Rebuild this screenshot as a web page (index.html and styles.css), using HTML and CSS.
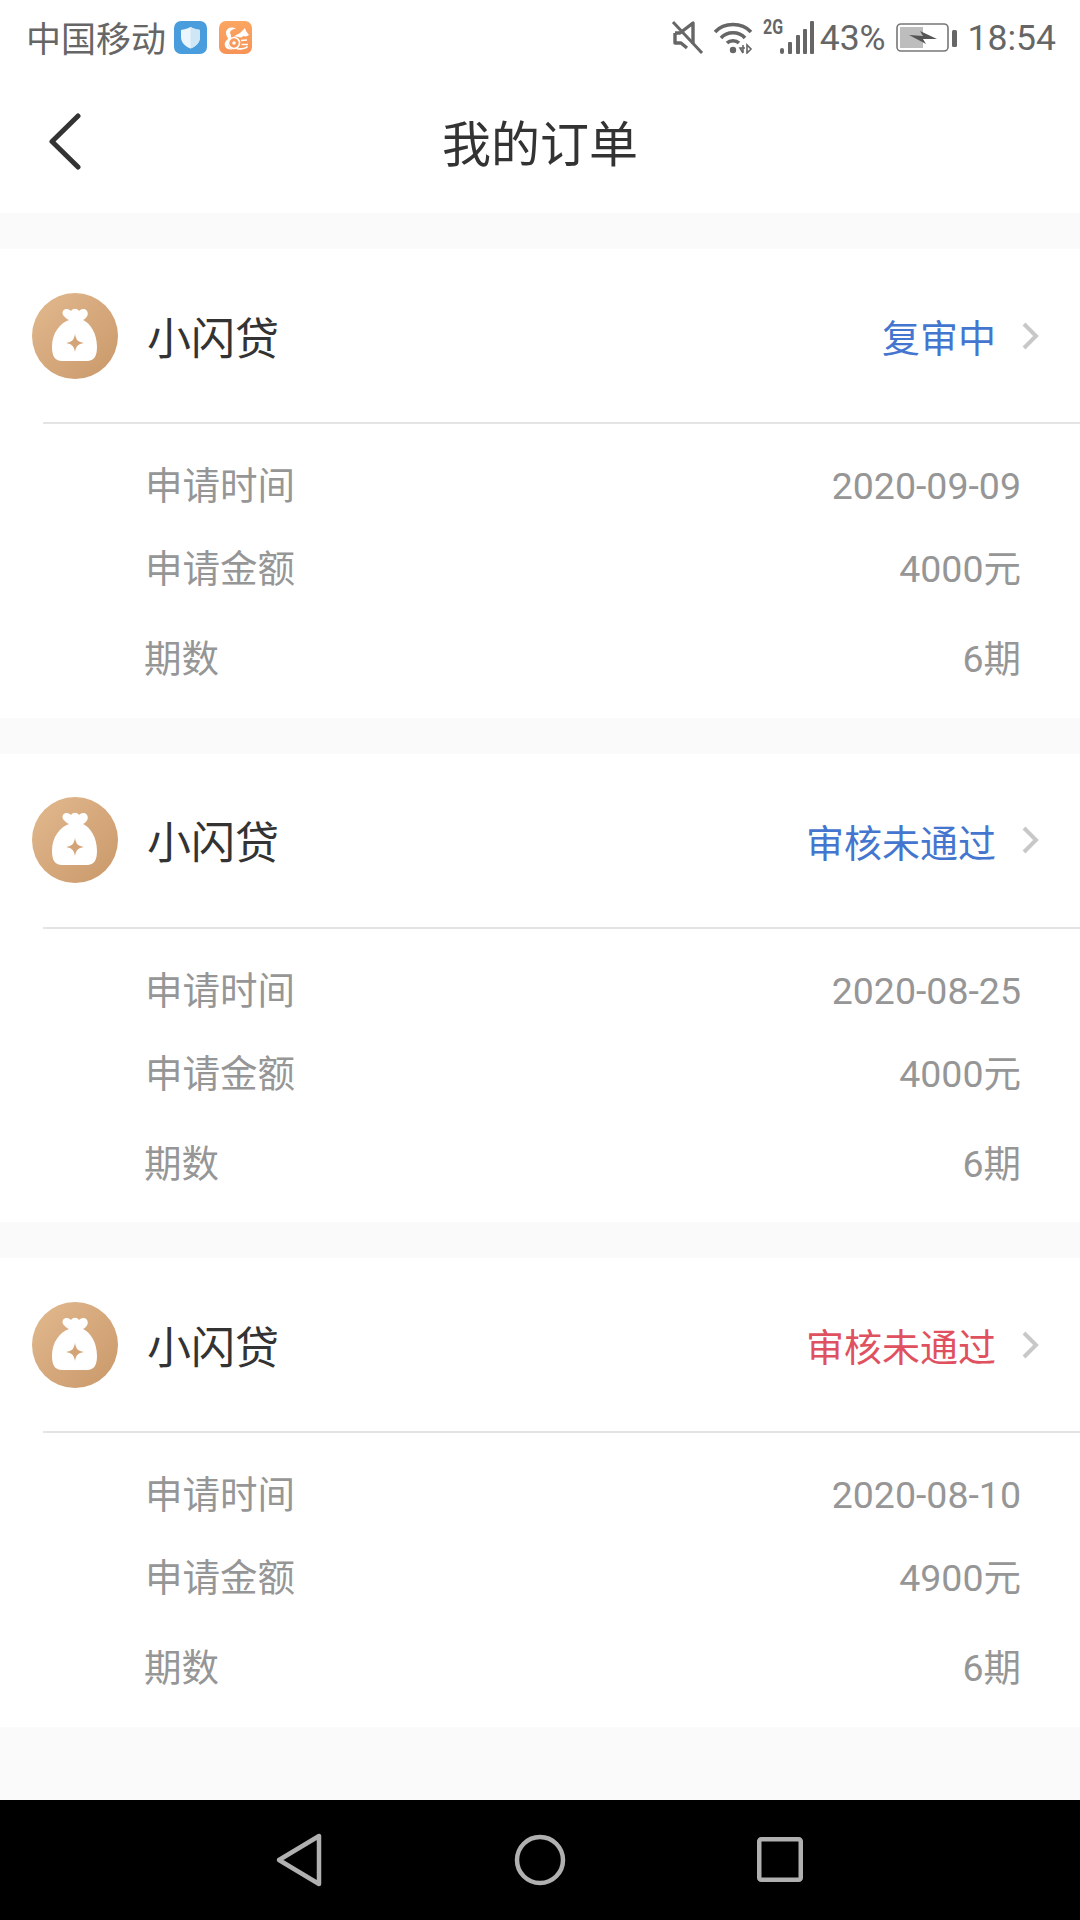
FILE: index.html
```html
<!DOCTYPE html>
<html lang="zh-CN">
<head>
    <meta charset="UTF-8">
    <meta name="viewport" content="width=device-width, initial-scale=1.0">
    <title>我的订单</title>
    <link rel="stylesheet" href="styles.css">
</head>
<body>
    <div class="top-area">
        <div class="status-bar">
            <div class="status-left">
                <span class="carrier">中国移动</span>
                <svg class="app-icon" width="33" height="33" viewBox="0 0 33 33">
                    <rect width="33" height="33" rx="7" fill="#4a9ddc"/>
                    <path d="M16.5 6 C20 8 23 8.500 26 9 V16 C26 22 21.500 25.500 16.500 27.500 C11.500 25.500 7 22 7 16 V9 C10 8.500 13 8 16.500 6Z" fill="#eaf5fc"/>
                    <path d="M16.500 6 C20 8 23 8.500 26 9 V16 C26 22 21.500 25.500 16.500 27.500Z" fill="#cfe6f6"/>
                </svg>
                <svg class="app-icon app-icon-uc" width="33" height="33" viewBox="0 0 33 33">
                    <defs>
                        <linearGradient id="ucBg" x1="0" y1="0" x2="0" y2="1">
                            <stop offset="0" stop-color="#fba661"/>
                            <stop offset="1" stop-color="#f79358"/>
                        </linearGradient>
                    </defs>
                    <rect width="33" height="33" rx="7" fill="url(#ucBg)"/>
                    <path d="M17 8 C13 5 7 7 7 12 C7 15 9 16 9 18 C6 20 5 23 6 25 C7 28 10 28.500 14 28.500 C9 27 7 22 11 18 C13 16 12 14 11 12 C11 10 13 8 17 8Z" fill="#fff"/>
                    <path d="M15 15.500 C18 13 20 13 21 12 L24 9 L26 7 L27 10 L30 14 L27 15.500 L24 15 C23 17 21 16.500 19 16 C18 15.500 16 15.500 15 15.500Z" fill="#fff"/>
                    <circle cx="15" cy="22" r="5.500" fill="none" stroke="#fff" stroke-width="1.600"/>
                    <circle cx="15" cy="22" r="1.800" fill="#fff"/>
                    <path d="M22 19.500 L28 19 M22.500 23.500 H29 M18 28 C23 28 27 27.500 28.500 25.500" fill="none" stroke="#fff" stroke-width="1.600"/>
                </svg>
            </div>
            <div class="status-right">
                <svg class="icon-mute" width="33" height="35" viewBox="0 0 33 35">
                    <path d="M4 13 H9 L22 3 V24 M4 13 V23 H10 L16 28" fill="none" stroke="#666" stroke-width="3.400" stroke-linejoin="round"/>
                    <path d="M2 2 L31 33" stroke="#666" stroke-width="3"/>
                </svg>
                <svg class="icon-wifi" width="40" height="33" viewBox="0 0 40 33">
                    <path d="M2 11 C11 1 29 1 38 11" fill="none" stroke="#666" stroke-width="3.500"/>
                    <path d="M8 17 C14 10 26 10 32 17" fill="none" stroke="#666" stroke-width="3.500"/>
                    <path d="M14 22 C17 19 23 19 26 22" fill="none" stroke="#666" stroke-width="3.500"/>
                    <circle cx="20" cy="29" r="3.200" fill="#666"/>
                    <path d="M30 32 L27 27 H32 M30 24 V32 M34 24 V32 L38 28Z" fill="none" stroke="#666" stroke-width="1.600"/>
                </svg>
                <span class="net-type">2G</span>
                <svg class="icon-signal" width="35" height="34" viewBox="0 0 35 34">
                    <rect x="0" y="27" width="4" height="6" rx="2" fill="#666"/>
                    <rect x="8" y="21" width="4" height="12" rx="1" fill="#666"/>
                    <rect x="16" y="14" width="4" height="19" rx="1" fill="#666"/>
                    <rect x="23" y="8" width="4" height="25" rx="1" fill="#666"/>
                    <rect x="30" y="0" width="4" height="33" rx="1" fill="#666"/>
                </svg>
                <span class="battery-text">43%</span>
                <svg class="icon-battery" width="61" height="30" viewBox="0 0 61 30">
                    <rect x="1" y="1" width="51" height="27" rx="4" fill="none" stroke="#777" stroke-width="1.600"/>
                    <rect x="4" y="4" width="23" height="21" fill="#bdbdbd"/>
                    <path d="M13 12 L27 13 L24 8 L41 16 L27 16 L30 21 Z" fill="#555"/>
                    <rect x="56" y="7" width="5" height="17" rx="1.500" fill="#666"/>
                </svg>
                <span class="clock">18:54</span>
            </div>
        </div>
        <div class="nav-bar">
            <a class="back-btn">
                <svg width="36" height="60" viewBox="0 0 36 60">
                    <path d="M31 3 L5 28.500 L31 54" fill="none" stroke="#333" stroke-width="5" stroke-linecap="round" stroke-linejoin="round"/>
                </svg>
            </a>
            <h1>我的订单</h1>
        </div>
    </div>

    <main class="order-list">
        <section class="order-card">
            <div class="order-head">
                <svg class="loan-logo" width="86" height="86" viewBox="0 0 86 86">
                    <defs>
                        <linearGradient id="logoBg" x1="0" y1="0" x2="1" y2="1">
                            <stop offset="0" stop-color="#e2b98f"/>
                            <stop offset="1" stop-color="#c99869"/>
                        </linearGradient>
                    </defs>
                    <circle cx="43" cy="43" r="43" fill="url(#logoBg)"/>
                    <path d="M37 27 C28 30 20 40 20 54 C20 63 23 68 30 68 H55 C62 68 65 63 65 54 C65 40 58 30 51 27 C55 25 57 21 55 18 C53 15 49 16 47 18 C45 15 41 15 39 18 C37 16 33 15 31 18 C29 21 33 25 37 27Z" fill="#fff"/>
                    <path d="M43 41 C44 47 46 49 52 50 C46 51 44 53 43 59 C42 53 40 51 34 50 C40 49 42 47 43 41Z" fill="#d3a477"/>
                </svg>
                <span class="loan-name">小闪贷</span>
                <span class="order-status status-blue">复审中</span>
                <svg class="arrow" width="20" height="30" viewBox="0 0 20 30">
                    <path d="M3 3 L15 15 L3 27" fill="none" stroke="#c8c8c8" stroke-width="4"/>
                </svg>
            </div>
            <div class="order-info">
                <div class="info-row"><span>申请时间</span><span>2020-09-09</span></div>
                <div class="info-row"><span>申请金额</span><span>4000元</span></div>
                <div class="info-row info-row-last"><span>期数</span><span>6期</span></div>
            </div>
        </section>

        <section class="order-card">
            <div class="order-head">
                <svg class="loan-logo" width="86" height="86" viewBox="0 0 86 86">
                    <circle cx="43" cy="43" r="43" fill="url(#logoBg)"/>
                    <path d="M37 27 C28 30 20 40 20 54 C20 63 23 68 30 68 H55 C62 68 65 63 65 54 C65 40 58 30 51 27 C55 25 57 21 55 18 C53 15 49 16 47 18 C45 15 41 15 39 18 C37 16 33 15 31 18 C29 21 33 25 37 27Z" fill="#fff"/>
                    <path d="M43 41 C44 47 46 49 52 50 C46 51 44 53 43 59 C42 53 40 51 34 50 C40 49 42 47 43 41Z" fill="#d3a477"/>
                </svg>
                <span class="loan-name">小闪贷</span>
                <span class="order-status status-blue">审核未通过</span>
                <svg class="arrow" width="20" height="30" viewBox="0 0 20 30">
                    <path d="M3 3 L15 15 L3 27" fill="none" stroke="#c8c8c8" stroke-width="4"/>
                </svg>
            </div>
            <div class="order-info">
                <div class="info-row"><span>申请时间</span><span>2020-08-25</span></div>
                <div class="info-row"><span>申请金额</span><span>4000元</span></div>
                <div class="info-row info-row-last"><span>期数</span><span>6期</span></div>
            </div>
        </section>

        <section class="order-card">
            <div class="order-head">
                <svg class="loan-logo" width="86" height="86" viewBox="0 0 86 86">
                    <circle cx="43" cy="43" r="43" fill="url(#logoBg)"/>
                    <path d="M37 27 C28 30 20 40 20 54 C20 63 23 68 30 68 H55 C62 68 65 63 65 54 C65 40 58 30 51 27 C55 25 57 21 55 18 C53 15 49 16 47 18 C45 15 41 15 39 18 C37 16 33 15 31 18 C29 21 33 25 37 27Z" fill="#fff"/>
                    <path d="M43 41 C44 47 46 49 52 50 C46 51 44 53 43 59 C42 53 40 51 34 50 C40 49 42 47 43 41Z" fill="#d3a477"/>
                </svg>
                <span class="loan-name">小闪贷</span>
                <span class="order-status status-red">审核未通过</span>
                <svg class="arrow" width="20" height="30" viewBox="0 0 20 30">
                    <path d="M3 3 L15 15 L3 27" fill="none" stroke="#c8c8c8" stroke-width="4"/>
                </svg>
            </div>
            <div class="order-info">
                <div class="info-row"><span>申请时间</span><span>2020-08-10</span></div>
                <div class="info-row"><span>申请金额</span><span>4900元</span></div>
                <div class="info-row info-row-last"><span>期数</span><span>6期</span></div>
            </div>
        </section>
    </main>

    <div class="system-nav">
        <svg width="60" height="60" viewBox="0 0 60 60">
            <path d="M9 30 L49 6 V54 Z" fill="none" stroke="#b0b0b0" stroke-width="4.500" stroke-linejoin="round"/>
        </svg>
        <svg width="60" height="60" viewBox="0 0 60 60">
            <circle cx="30" cy="30" r="23" fill="none" stroke="#b0b0b0" stroke-width="4.500"/>
        </svg>
        <svg width="60" height="60" viewBox="0 0 60 60">
            <rect x="9.250" y="9.250" width="41.500" height="40.500" rx="2" fill="none" stroke="#b0b0b0" stroke-width="4.500"/>
        </svg>
    </div>
</body>
</html>
```

FILE: styles.css
```css
body {
    font-family: Roboto, "Noto Sans CJK SC", sans-serif;
    background-color: #fafafa;
    display: flex;
    flex-direction: column;
    height: 1920px;
    width: 1080px;
    margin: 0;
    overflow: hidden;
}
svg {
    display: block;
    flex: none;
}
.top-area {
    background-color: #fff;
    height: 213px;
}
.status-bar {
    display: flex;
    justify-content: space-between;
    align-items: center;
    height: 75px;
    padding: 0 24px 0 26px;
    color: #666;
    font-size: 35.5px;
}
.status-left, .status-right {
    display: flex;
    align-items: center;
}
.carrier {
    margin: 0 8px 3px 0;
    font-size: 35px;
}
.app-icon-uc {
    margin-left: 12px;
}
.icon-wifi {
    margin-left: 9px;
}
.net-type {
    align-self: flex-start;
    margin: 1px 0 0 10px;
    width: 17px;
    font-size: 20px;
    line-height: 18px;
    font-weight: bold;
    transform: scaleX(0.8);
    transform-origin: left;
}
.battery-text {
    margin-left: 5px;
}
.icon-battery {
    margin-left: 10px;
}
.clock {
    margin-left: 11px;
}
.nav-bar {
    position: relative;
    height: 138px;
    padding-top: 2px;
    box-sizing: border-box;
    display: flex;
    align-items: center;
    justify-content: center;
}
.nav-bar h1 {
    margin: 0;
    font-size: 49px;
    line-height: 49px;
    font-weight: normal;
    color: #333;
}
.back-btn {
    position: absolute;
    left: 47px;
    top: 38px;
}
.order-list {
    flex: 1;
    padding-top: 36px;
}
.order-card {
    background-color: #fff;
    height: 468.5px;
    margin-bottom: 36px;
}
.order-head {
    display: flex;
    align-items: center;
    height: 173px;
    margin-left: 43px;
    border-bottom: 2px solid #e4e4e4;
}
.loan-logo {
    margin-left: -11px;
}
.loan-name {
    margin-left: 29px;
    font-size: 44px;
    color: #333;
}
.order-status {
    margin-left: auto;
    font-size: 38px;
}
.status-blue {
    color: #4476cf;
}
.status-red {
    color: #e0515f;
}
.arrow {
    margin: 0 39px 0 25px;
}
.order-info {
    padding: 21px 59px 0 145px;
    color: #969696;
    font-size: 37.5px;
}
.info-row {
    display: flex;
    justify-content: space-between;
    align-items: baseline;
    line-height: 83px;
}
.info-row-last {
    margin: 7px 0 0 -1px;
}
.system-nav {
    display: flex;
    justify-content: center;
    align-items: center;
    gap: 180px;
    height: 120px;
    background-color: #000;
}
```
